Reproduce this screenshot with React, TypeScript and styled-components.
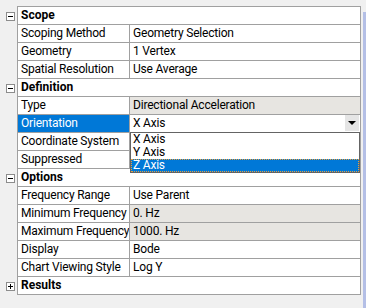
import React from "react";
import styled, { createGlobalStyle } from "styled-components";

type Prop = {
  label: string;
  value: string;
  readOnly?: boolean;
  selected?: boolean;
  combo?: string[];
};

type Section = {
  title: string;
  open: boolean;
  rows: Prop[];
};

const sections: Section[] = [
  {
    title: "Scope",
    open: true,
    rows: [
      { label: "Scoping Method", value: "Geometry Selection" },
      { label: "Geometry", value: "1 Vertex" },
      { label: "Spatial Resolution", value: "Use Average" },
    ],
  },
  {
    title: "Definition",
    open: true,
    rows: [
      { label: "Type", value: "Directional Acceleration", readOnly: true },
      { label: "Orientation", value: "X Axis", selected: true, combo: ["X Axis", "Y Axis", "Z Axis"] },
      // values under the open list are hidden
      { label: "Coordinate System", value: "" },
      { label: "Suppressed", value: "" },
    ],
  },
  {
    title: "Options",
    open: true,
    rows: [
      { label: "Frequency Range", value: "Use Parent" },
      { label: "Minimum Frequency", value: "0. Hz", readOnly: true },
      { label: "Maximum Frequency", value: "1000. Hz", readOnly: true },
      { label: "Display", value: "Bode" },
      { label: "Chart Viewing Style", value: "Log Y" },
    ],
  },
  { title: "Results", open: false, rows: [] },
];

const App = () => {
  return (
    <>
      <GlobalStyle />
      <Page>
        <Main>
          <TopStrip />
          <TopRule />
          {sections.map((s) => (
            <React.Fragment key={s.title}>
              <Row>
                <Gutter>
                  <Toggle>
                    <Dash />
                    {!s.open && <Stem />}
                  </Toggle>
                </Gutter>
                <Body>
                  <HeaderCell>{s.title}</HeaderCell>
                </Body>
              </Row>
              {s.rows.map((r) => (
                <Row key={r.label}>
                  <Gutter />
                  <Body>
                    <LabelCell $selected={r.selected}>{r.label}</LabelCell>
                    <ValueCell $readOnly={r.readOnly}>
                      {r.value}
                      {r.combo && (
                        <>
                          <DropButton>
                            <Arrow />
                          </DropButton>
                          <ListBox>
                            {r.combo.map((c, i) => (
                              <ListItem key={c} $active={i === 2}>
                                {c}
                              </ListItem>
                            ))}
                          </ListBox>
                        </>
                      )}
                    </ValueCell>
                  </Body>
                </Row>
              ))}
            </React.Fragment>
          ))}
        </Main>
        <RightEdge>
          <EdgeLine />
        </RightEdge>
      </Page>
    </>
  );
};

export default App;

const GlobalStyle = createGlobalStyle`
  html, body {
    margin: 0;
    padding: 0;
    background: #f0f0f0;
  }
  body {
    font-family: Roboto, "Noto Sans", sans-serif;
    font-size: 12px;
    letter-spacing: -0.2px;
    color: #000;
  }
`;

const Page = styled.div`
  display: flex;
  width: 366px;
  height: 308px;
  overflow: hidden;
  background: #f0f0f0;
`;

const Main = styled.div`
  width: 361px;
  display: flex;
  flex-direction: column;
`;

const TopStrip = styled.div`
  height: 6px;
`;

const TopRule = styled.div`
  height: 1px;
  margin-left: 17px;
  width: 344px;
  background: #a0a0a0;
`;

const Row = styled.div`
  display: flex;
  height: 18px;
`;

const Gutter = styled.div`
  width: 17px;
  flex: none;
  box-sizing: border-box;
  padding: 5px 0 0 6px;
`;

const Toggle = styled.div`
  position: relative;
  width: 9px;
  height: 9px;
  box-sizing: border-box;
  border: 1px solid #8c8c8c;
  background: #fff;
`;

const Dash = styled.div`
  position: absolute;
  left: 1px;
  top: 3px;
  width: 5px;
  height: 1px;
  background: #000;
`;

const Stem = styled.div`
  position: absolute;
  left: 3px;
  top: 1px;
  width: 1px;
  height: 5px;
  background: #000;
`;

const Body = styled.div`
  display: flex;
  width: 344px;
  box-sizing: border-box;
  border-left: 1px solid #a0a0a0;
  border-right: 1px solid #a0a0a0;
  border-bottom: 1px solid #a0a0a0;
  background: #fff;
`;

const HeaderCell = styled.div`
  flex: 1;
  padding-left: 3px;
  font-weight: bold;
  letter-spacing: 0;
  line-height: 17px;
`;

const LabelCell = styled.div<{ $selected?: boolean }>`
  width: 112px;
  flex: none;
  box-sizing: border-box;
  border-right: 1px solid #a0a0a0;
  padding-left: 3px;
  line-height: 17px;
  white-space: nowrap;
  overflow: hidden;
  background: ${(p) => (p.$selected ? "#0078d7" : "#fff")};
  color: ${(p) => (p.$selected ? "#fff" : "#000")};
`;

const ValueCell = styled.div<{ $readOnly?: boolean }>`
  position: relative;
  flex: 1;
  padding-left: 3px;
  line-height: 17px;
  white-space: nowrap;
  background: ${(p) => (p.$readOnly ? "#e7e5e1" : "#fff")};
`;

const DropButton = styled.div`
  position: absolute;
  right: 1px;
  top: 0;
  width: 14px;
  height: 16px;
  background: #e5e5e5;
  display: flex;
  align-items: center;
  justify-content: center;
`;

const Arrow = styled.div`
  width: 0;
  height: 0;
  border-left: 4px solid transparent;
  border-right: 4px solid transparent;
  border-top: 4px solid #000;
`;

const ListBox = styled.div`
  position: absolute;
  left: 0;
  top: 17px;
  width: 230px;
  box-sizing: border-box;
  border: 1px solid #646464;
  background: #fff;
  z-index: 2;
`;

const ListItem = styled.div<{ $active?: boolean }>`
  height: 13px;
  line-height: 13px;
  padding-left: 2px;
  background: ${(p) => (p.$active ? "#0078d7" : "#fff")};
  color: ${(p) => (p.$active ? "#fff" : "#000")};
  outline: 1px dotted ${(p) => (p.$active ? "#e8a040" : "transparent")};
  outline-offset: -1px;
`;

const RightEdge = styled.div`
  flex: 1;
  display: flex;
  justify-content: flex-end;
  padding-top: 12px;
`;

const EdgeLine = styled.div`
  width: 3px;
  background: #b4bfe6;
`;
